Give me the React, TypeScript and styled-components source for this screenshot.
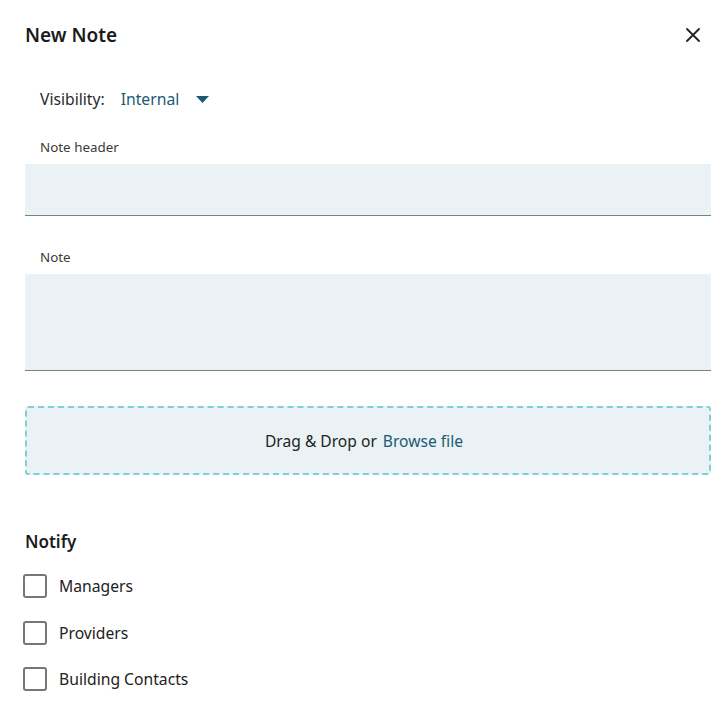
import styled, { createGlobalStyle } from 'styled-components';

const GlobalStyle = createGlobalStyle`
  html, body {
    margin: 0;
    padding: 0;
    background: #fff;
    font-family: 'Noto Sans', 'Open Sans', sans-serif;
    color: #222;
  }
`;

const notifyOptions = ['Managers', 'Providers', 'Building Contacts'];

export default function App() {
  return (
    <>
      <GlobalStyle />
      <Panel>
        <Header>
          <Title>New Note</Title>
          <CloseButton aria-label="Close">
            <svg width="14" height="14" viewBox="0 0 14 14">
              <path d="M1 1L13 13M13 1L1 13" stroke="#222" strokeWidth="1.8" strokeLinecap="round" />
            </svg>
          </CloseButton>
        </Header>

        <VisibilityRow>
          <span>Visibility:</span>
          <VisibilityValue>Internal</VisibilityValue>
          <Caret viewBox="0 0 13 7" width="13" height="7">
            <path d="M0 0H13L6.5 7Z" fill="#1c5a74" />
          </Caret>
        </VisibilityRow>

        <FieldLabel $top={29}>Note header</FieldLabel>
        <Field $height={52} />

        <FieldLabel $top={32}>Note</FieldLabel>
        <Field $height={97} />

        <DropZone>
          Drag &amp; Drop or<BrowseLink>Browse file</BrowseLink>
        </DropZone>

        <SectionTitle>Notify</SectionTitle>
        <CheckList>
          {notifyOptions.map((label) => (
            <CheckRow key={label}>
              <CheckBox />
              <span>{label}</span>
            </CheckRow>
          ))}
        </CheckList>
      </Panel>
    </>
  );
}

const Panel = styled.div`
  width: 725px;
  height: 718px;
  box-sizing: border-box;
  padding: 0 14px 0 25px;
  display: flex;
  flex-direction: column;
  overflow: hidden;
`;

const Header = styled.header`
  height: 70px;
  display: flex;
  align-items: center;
  justify-content: space-between;
`;

const Title = styled.h1`
  margin: 0;
  font-size: 19px;
  font-weight: 600;
  color: #1b1b1b;
  line-height: 24px;
`;

const CloseButton = styled.button`
  width: 24px;
  height: 24px;
  margin-right: 6px;
  padding: 0;
  border: none;
  background: none;
  display: flex;
  align-items: center;
  justify-content: center;
  cursor: pointer;
`;

const VisibilityRow = styled.div`
  margin-top: 19px;
  padding-left: 15px;
  display: flex;
  align-items: center;
  height: 20px;
  font-size: 15.7px;
  color: #2a2a2a;
`;

const VisibilityValue = styled.span`
  margin-left: 16px;
  color: #1c5a74;
`;

const Caret = styled.svg`
  margin-left: 17px;
  margin-top: 1px;
`;

const FieldLabel = styled.label<{ $top: number }>`
  margin-top: ${(p) => p.$top}px;
  padding-left: 15px;
  font-size: 13.4px;
  line-height: 18px;
  color: #3a3a3a;
`;

const Field = styled.div<{ $height: number }>`
  margin-top: 8px;
  height: ${(p) => p.$height}px;
  box-sizing: border-box;
  background: #eaf2f5;
  border-bottom: 1px solid #7b8085;
  border-radius: 2px 2px 0 0;
`;

const DropZone = styled.div`
  margin-top: 35px;
  height: 69px;
  box-sizing: border-box;
  padding-right: 8px;
  border: 2px dashed #7fcfdb;
  border-radius: 3px;
  background: #eaf2f5;
  display: flex;
  align-items: center;
  justify-content: center;
  font-size: 15.6px;
  color: #222;
  white-space: pre;
`;

const BrowseLink = styled.span`
  margin-left: 6px;
  color: #1c5a74;
  cursor: pointer;
`;

const SectionTitle = styled.h2`
  margin: 55px 0 0;
  font-size: 17px;
  font-weight: 600;
  line-height: 24px;
  color: #1b1b1b;
`;

const CheckList = styled.div`
  margin-top: 20px;
  margin-left: -2px;
  display: flex;
  flex-direction: column;
  gap: 22.5px;
`;

const CheckRow = styled.label`
  display: flex;
  align-items: center;
  gap: 12px;
  height: 24px;
  font-size: 15.7px;
  color: #222;
`;

const CheckBox = styled.span`
  width: 24px;
  height: 24px;
  box-sizing: border-box;
  border: 2px solid #777;
  border-radius: 3px;
  background: #fff;
`;
